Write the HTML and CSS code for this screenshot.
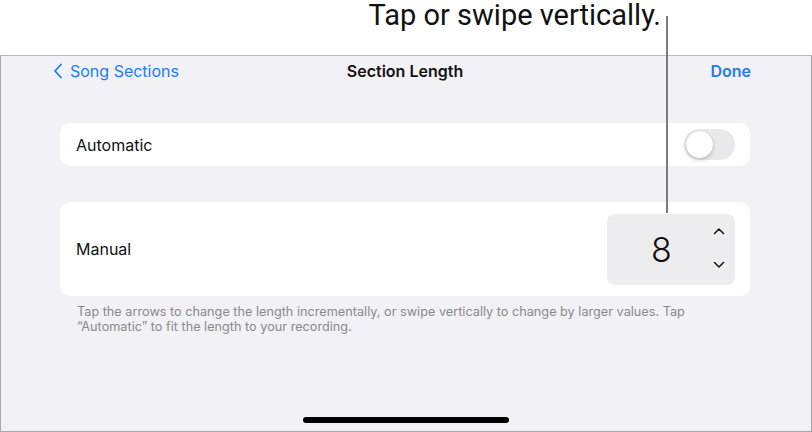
FILE: index.html
```html
<!DOCTYPE html>
<html>
<head>
<meta charset="utf-8">
<link rel="stylesheet" href="styles.css">
</head>
<body>
<div class="page">
  <div class="callout">
    <span class="callout-text">Tap or swipe vertically.</span>
  </div>
  <div class="callout-line"></div>
  <div class="screen">
    <div class="navbar">
      <div class="back">
        <svg class="chev" width="10" height="16" viewBox="0 0 10 16"><path d="M8 1.5 L2 8 L8 14.5" fill="none" stroke="#1c7cf4" stroke-width="1.8" stroke-linecap="round" stroke-linejoin="round"/></svg>
        <span>Song Sections</span>
      </div>
      <div class="title">Section Length</div>
      <div class="done">Done</div>
    </div>
    <div class="content">
      <div class="card card-auto">
        <span class="label">Automatic</span>
        <div class="toggle"><div class="knob"></div></div>
      </div>
      <div class="card card-manual">
        <span class="label">Manual</span>
        <div class="stepper">
          <span class="value">8</span>
          <div class="arrows">
            <svg width="12" height="8" viewBox="0 0 12 8"><path d="M1.5 6.5 L6 2 L10.5 6.5" fill="none" stroke="#1d1d1f" stroke-width="1.6" stroke-linecap="round" stroke-linejoin="round"/></svg>
            <svg width="12" height="8" viewBox="0 0 12 8"><path d="M1.5 1.5 L6 6 L10.5 1.5" fill="none" stroke="#1d1d1f" stroke-width="1.6" stroke-linecap="round" stroke-linejoin="round"/></svg>
          </div>
        </div>
      </div>
      <p class="note">Tap the arrows to change the length incrementally, or swipe vertically to change by larger values. Tap “Automatic” to fit the length to your recording.</p>
    </div>
    <div class="home"></div>
  </div>
</div>
</body>
</html>
```
FILE: styles.css
```css
html, body {
  margin: 0;
  padding: 0;
  background: #ffffff;
}
.page {
  position: relative;
  width: 812px;
  height: 432px;
  font-family: Inter, "Noto Sans", sans-serif;
}
.callout {
  height: 55px;
  display: flex;
  justify-content: flex-end;
  align-items: flex-start;
  padding-right: 151px;
  box-sizing: border-box;
}
.callout-text {
  font-family: Roboto, sans-serif;
  font-size: 29px;
  line-height: 30px;
  color: #111;
}
.callout-line {
  position: absolute;
  left: 666px;
  top: 16px;
  width: 2px;
  height: 197px;
  background: #7b7b7b;
}
.screen {
  height: 377px;
  box-sizing: border-box;
  border: 1px solid #a9a9ab;
  border-top: 1px solid #b9b9bb;
  background: #f2f1f6;
  display: flex;
  flex-direction: column;
}
.navbar {
  height: 30px;
  display: flex;
  align-items: center;
  justify-content: space-between;
  padding: 0 60px 0 52px;
  font-size: 16px;
}
.back {
  display: flex;
  align-items: center;
  gap: 7px;
  color: #1c7cf4;
  width: 130px;
}
.title {
  font-weight: 600;
  color: #111;
  margin-left: 6px;
}
.done {
  font-weight: 600;
  color: #1c7cf4;
  width: 130px;
  text-align: right;
}
.content {
  padding: 37px 61px 0 59px;
  display: flex;
  flex-direction: column;
}
.card {
  background: #fff;
  border-radius: 10px;
  display: flex;
  align-items: center;
  justify-content: space-between;
  padding: 0 15px 0 16px;
}
.card-auto {
  height: 43px;
}
.card-manual {
  margin-top: 36px;
  height: 94px;
}
.label {
  font-size: 16px;
  color: #111;
}
.toggle {
  width: 51px;
  height: 31px;
  border-radius: 16px;
  background: #e9e9eb;
  position: relative;
}
.knob {
  position: absolute;
  left: 2px;
  top: 2px;
  width: 27px;
  height: 27px;
  border-radius: 50%;
  background: #fff;
  box-shadow: 0 2px 4px rgba(0,0,0,0.18), 0 0 1px rgba(0,0,0,0.2);
}
.stepper {
  width: 128px;
  height: 71px;
  background: #ededef;
  border-radius: 8px;
  display: flex;
  align-items: center;
  box-sizing: border-box;
  padding-left: 44px;
}
.value {
  font-size: 34px;
  font-weight: 300;
  color: #111;
  width: 22px;
}
.arrows {
  margin-left: 40px;
  display: flex;
  flex-direction: column;
  gap: 26px;
  margin-top: -2px;
}
.arrows svg {
  display: block;
}
.note {
  margin: 8px 0 0 17px;
  font-size: 12.7px;
  line-height: 15px;
  color: #8a8a8e;
  padding-right: 20px;
}
.home {
  margin-top: auto;
  margin-bottom: 8px;
  align-self: center;
  width: 206px;
  height: 6px;
  border-radius: 3px;
  background: #000;
}
```
